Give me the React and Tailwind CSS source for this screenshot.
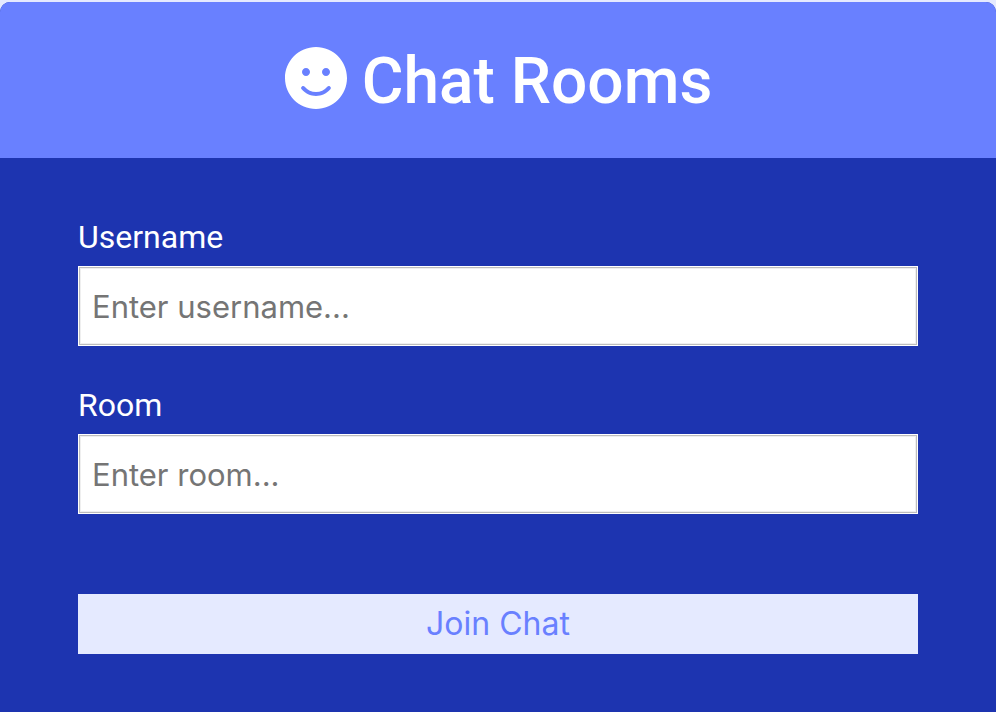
import React from "react";
import { FaSmile } from "react-icons/fa";

function Field({ id, label, placeholder }) {
  return (
    <div className="mb-10">
      <label htmlFor={id} className="mb-2.5 block text-[32px] leading-[38px] text-white">
        {label}
      </label>
      <input
        id={id}
        name={id}
        type="text"
        placeholder={placeholder}
        className="block h-20 w-full border border-white bg-white px-[13px] font-['Inter',sans-serif] text-[31px] text-black shadow-[inset_0_0_0_1px_#bdbdbd,inset_0_0_0_2px_#efefef] placeholder:text-[#757575]"
      />
    </div>
  );
}

export default function App() {
  return (
    <div className="min-h-screen bg-[#e5eaff] pt-0.5 font-['Roboto',sans-serif]">
      <main className="flex min-h-[calc(100vh-2px)] flex-col overflow-hidden rounded-t-[10px] bg-[#1d34b0]">
        <header className="bg-[#6980ff] px-10 pt-10 pb-9 text-center">
          <h1 className="flex items-start justify-center gap-3.5 text-[64px] leading-[80px] font-medium text-white">
            <FaSmile size={64} className="mt-1" aria-hidden="true" />
            Chat Rooms
          </h1>
        </header>
        <form className="px-[78px] pt-[60px] pb-10" onSubmit={(e) => e.preventDefault()}>
          <Field id="username" label="Username" placeholder="Enter username..." />
          <Field id="room" label="Room" placeholder="Enter room..." />
          <button
            type="submit"
            className="mt-20 block h-[60px] w-full bg-[#e5eaff] font-['Inter',sans-serif] text-[32px] text-[#6980ff]"
          >
            Join Chat
          </button>
        </form>
      </main>
    </div>
  );
}
